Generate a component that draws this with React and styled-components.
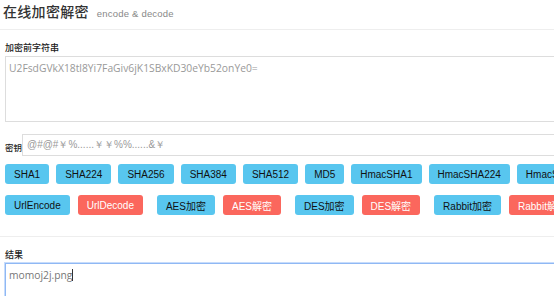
import React from 'react';
import styled, { createGlobalStyle } from 'styled-components';

const GlobalStyle = createGlobalStyle`
  html, body {
    margin: 0;
    padding: 0;
    background: #fff;
    overflow: hidden;
  }
  body {
    font-family: "Liberation Sans", "Noto Sans CJK SC", sans-serif;
    color: #333;
  }
`;

const Page = styled.div`
  width: 720px;
`;

const Header = styled.div`
  height: 29px;
  display: flex;
  align-items: baseline;
  padding: 0 3px;
  border-bottom: 1px solid #eee;
`;

const Title = styled.h1`
  margin: 0;
  font-family: "Noto Sans CJK SC", sans-serif;
  font-size: 14px;
  font-weight: 500;
  line-height: 22px;
  color: #333;
  letter-spacing: 0.3px;
`;

const Sub = styled.small`
  margin-left: 8px;
  font-size: 9.5px;
  color: #888;
  letter-spacing: 0.2px;
`;

const Body = styled.div`
  padding: 0 5px;
`;

const Label = styled.label`
  display: block;
  font-family: "Noto Sans CJK SC", sans-serif;
  font-size: 9px;
  font-weight: 500;
  line-height: 12px;
  color: #222;
  margin-top: ${p => p.$top || 0}px;
  margin-bottom: 2px;
`;

const Area = styled.div`
  box-sizing: border-box;
  width: 640px;
  height: ${p => p.$h}px;
  border: 1px solid ${p => (p.$focus ? '#8fb8f4' : '#ddd')};
  box-shadow: ${p => (p.$focus ? '0 0 0 1px #c7dcfb' : 'none')};
  padding: 4px 3px;
  font-family: "Open Sans", sans-serif;
  font-size: 10.3px;
  line-height: 14px;
  color: ${p => (p.$dark ? '#777' : '#999')};
`;

const Caret = styled.span`
  display: inline-block;
  width: 1px;
  height: 12px;
  background: #333;
  vertical-align: -2px;
`;

const KeyRow = styled.div`
  display: flex;
  align-items: center;
  margin-top: 12px;
`;

const KeyLabel = styled.span`
  flex: none;
  width: 17px;
  white-space: nowrap;
  font-family: "Noto Sans CJK SC", sans-serif;
  font-size: 8.5px;
  font-weight: 500;
  color: #222;
  padding-top: 3px;
`;

const KeyInput = styled.div`
  box-sizing: border-box;
  width: 620px;
  height: 22px;
  border: 1px solid #ddd;
  padding: 0 4px;
  display: flex;
  align-items: center;
  font-family: "Liberation Sans", sans-serif;
  font-size: 10px;
  color: #999;
`;

const BtnRow = styled.div`
  display: flex;
  flex-wrap: nowrap;
  gap: ${p => p.$gap}px;
  margin-top: ${p => p.$top}px;
`;

const Btn = styled.span`
  flex: none;
  box-sizing: border-box;
  height: 20px;
  padding: 0 9px;
  border-radius: 3px;
  display: inline-flex;
  align-items: center;
  white-space: nowrap;
  font-family: "Liberation Sans", "Noto Sans CJK SC", sans-serif;
  font-size: 10px;
  background: ${p => (p.$red ? '#fb675d' : '#58c6ef')};
  color: ${p => (p.$red ? '#fff' : '#111')};
  margin-left: ${p => (p.$group ? 6 : 0)}px;
`;

const Divider = styled.div`
  margin-top: 21px;
  border-top: 1px solid #eee;
`;

const hashes = ['SHA1', 'SHA224', 'SHA256', 'SHA384', 'SHA512', 'MD5', 'HmacSHA1', 'HmacSHA224', 'HmacSHA256'];
const ciphers = [
  ['UrlEncode', false, false],
  ['UrlDecode', true, false],
  ['AES加密', false, true],
  ['AES解密', true, false],
  ['DES加密', false, true],
  ['DES解密', true, false],
  ['Rabbit加密', false, true],
  ['Rabbit解密', true, false],
];

const App = () => (
  <Page>
    <GlobalStyle />
    <Header>
      <Title>在线加密解密</Title>
      <Sub>encode &amp; decode</Sub>
    </Header>
    <Body>
      <Label $top={12}>加密前字符串</Label>
      <Area $h={66}>U2FsdGVkX18tl8Yi7FaGiv6jK1SBxKD30eYb52onYe0=</Area>
      <KeyRow>
        <KeyLabel>密钥</KeyLabel>
        <KeyInput>@#@#￥%......￥￥%%......&amp;￥</KeyInput>
      </KeyRow>
      <BtnRow $top={8} $gap={7}>
        {hashes.map(h => <Btn key={h}>{h}</Btn>)}
      </BtnRow>
      <BtnRow $top={11} $gap={8}>
        {ciphers.map(([t, red, group]) => (
          <Btn key={t} $red={red} $group={group}>{t}</Btn>
        ))}
      </BtnRow>
    </Body>
    <Divider />
    <Body>
      <Label $top={12}>结果</Label>
      <Area $h={40} $focus $dark>momoj2j.png<Caret /></Area>
    </Body>
  </Page>
);

export default App;
